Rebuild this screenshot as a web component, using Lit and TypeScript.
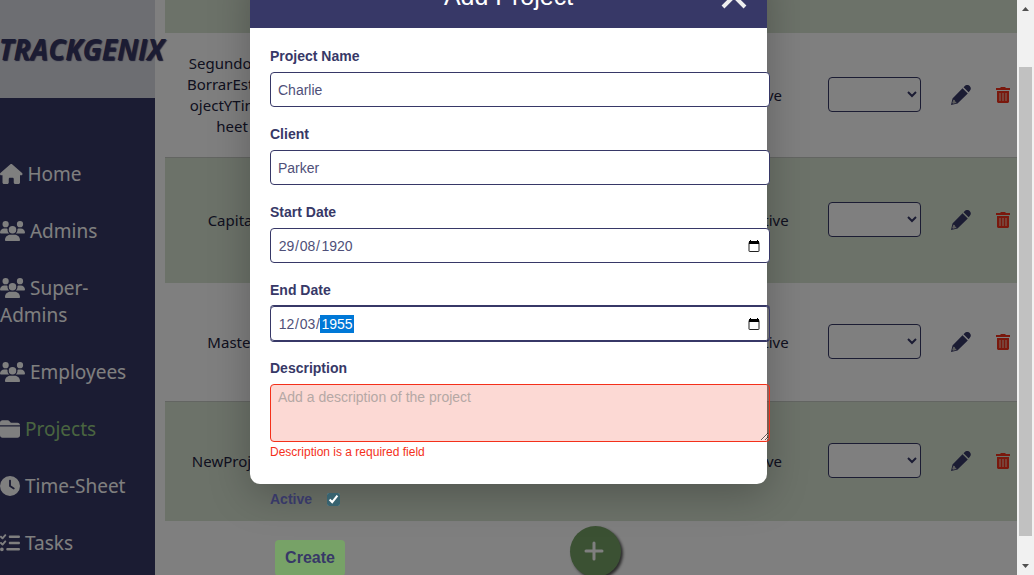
import { LitElement, html, css, svg } from "lit";
import { customElement } from "lit/decorators.js";

const ICONS: Record<string, { w: number; d: string }> = {
  home: { w: 576, d: "M575.8 255.5c0 18-15 32.1-32 32.1h-32l.7 160.2c0 2.7-.2 5.4-.5 8.1V472c0 22.1-17.9 40-40 40H456c-1.1 0-2.2 0-3.3-.1c-1.4 .1-2.8 .1-4.2 .1H416 392c-22.1 0-40-17.9-40-40V448 384c0-17.7-14.3-32-32-32H256c-17.7 0-32 14.3-32 32v64 24c0 22.1-17.9 40-40 40H160 128.1c-1.5 0-3-.1-4.5-.2c-1.2 .1-2.4 .2-3.6 .2H104c-22.1 0-40-17.9-40-40V360c0-.9 0-1.9 .1-2.8V287.6H32c-18 0-32-14-32-32.1c0-9 3-17 10-24L266.4 8c7-7 15-8 22-8s15 2 21 7L564.8 231.5c8 7 12 15 11 24z" },
  users: { w: 640, d: "M144 0a80 80 0 1 1 0 160A80 80 0 1 1 144 0zM512 0a80 80 0 1 1 0 160A80 80 0 1 1 512 0zM0 298.7C0 239.8 47.8 192 106.7 192h42.7c15.9 0 31 3.5 44.6 9.7c-1.3 7.2-1.9 14.7-1.9 22.3c0 38.2 16.8 72.5 43.3 96c-.2 0-.4 0-.7 0H21.3C9.6 320 0 310.4 0 298.7zM405.3 320c-.2 0-.4 0-.7 0c26.6-23.5 43.3-57.8 43.3-96c0-7.6-.7-15-1.9-22.3c13.6-6.3 28.7-9.7 44.6-9.7h42.7C592.2 192 640 239.8 640 298.7c0 11.8-9.6 21.3-21.3 21.3H405.3zM224 224a96 96 0 1 1 192 0 96 96 0 1 1 -192 0zM128 485.3C128 411.7 187.7 352 261.3 352H378.7C452.3 352 512 411.7 512 485.3c0 14.7-11.9 26.7-26.7 26.7H154.7c-14.7 0-26.7-11.9-26.7-26.7z" },
  folder: { w: 512, d: "M448 480H64c-35.3 0-64-28.7-64-64V192H512V416c0 35.3-28.7 64-64 64zm64-320H0V96C0 60.7 28.7 32 64 32H192c20.1 0 39.1 9.5 51.2 25.6l19.2 25.6c6 8.1 15.5 12.8 25.6 12.8H448c35.3 0 64 28.7 64 64z" },
  clock: { w: 512, d: "M256 0a256 256 0 1 1 0 512A256 256 0 1 1 256 0zM232 120V256c0 8 4 15.5 10.7 20l96 64c11 7.4 25.9 4.4 33.3-6.7s4.4-25.9-6.7-33.3L280 243.2V120c0-13.3-10.7-24-24-24s-24 10.7-24 24z" },
  tasks: { w: 512, d: "M152.1 38.2c9.9 8.9 10.7 24 1.8 33.9l-72 80c-4.4 4.9-10.6 7.8-17.2 7.9s-12.9-2.4-17.6-7L7 113C-2.3 103.6-2.3 88.4 7 79s24.6-9.4 33.9 0l22.1 22.1 55.1-61.2c8.9-9.9 24-10.7 33.9-1.8zm0 160c9.9 8.9 10.7 24 1.8 33.9l-72 80c-4.4 4.9-10.6 7.8-17.2 7.9s-12.9-2.4-17.6-7L7 273c-9.4-9.4-9.4-24.6 0-33.9s24.6-9.4 33.9 0l22.1 22.1 55.1-61.2c8.9-9.9 24-10.7 33.9-1.8zM224 96c0-17.7 14.3-32 32-32H480c17.7 0 32 14.3 32 32s-14.3 32-32 32H256c-17.7 0-32-14.3-32-32zm0 160c0-17.7 14.3-32 32-32H480c17.7 0 32 14.3 32 32s-14.3 32-32 32H256c-17.7 0-32-14.3-32-32zM160 416c0-17.7 14.3-32 32-32H480c17.7 0 32 14.3 32 32s-14.3 32-32 32H192c-17.7 0-32-14.3-32-32zM48 368a48 48 0 1 1 0 96 48 48 0 1 1 0-96z" },
};

const NAV = [
  { icon: "home", label: "Home" },
  { icon: "users", label: "Admins" },
  { icon: "users", label: "Super-Admins" },
  { icon: "users", label: "Employees" },
  { icon: "folder", label: "Projects", current: true },
  { icon: "clock", label: "Time-Sheet" },
  { icon: "tasks", label: "Tasks" },
];

const ROWS = [
  { name: ["SegundoPar", "BorrarEstePr", "ojectYTimes", "heet"], status: "Active" },
  { name: ["Capital"], status: "Inactive" },
  { name: ["Master"], status: "Inactive" },
  { name: ["NewProject"], status: "Active" },
];

@customElement("side-nav")
class SideNav extends LitElement {
  static styles = css`
    :host { display: block; background: #373867; color: #fff; font-family: "Noto Sans", sans-serif; }
    .brand { display: flex; align-items: center; justify-content: flex-end; height: 98px; background: #dadce4; }
    .name { margin: 0 -9px 0 0; color: #373867; font: italic 700 28px/36px "Open Sans", sans-serif; text-shadow: 1px 1px 1px #373867; white-space: nowrap; }
    .list { margin: 0; padding: 63px 0 0; list-style: none; display: flex; flex-direction: column; gap: 30px; }
    .link { display: block; color: inherit; text-decoration: none; font-size: 19px; line-height: 27px; }
    .current { color: #94ca81; }
    .icon { height: 20px; vertical-align: -3px; fill: #fff; }
  `;
  render() {
    return html`
      <div class="brand"><span class="name">TRACKGENIX</span></div>
      <nav>
        <ul class="list">
          ${NAV.map((n) => html`<li><a class="link ${n.current ? "current" : ""}" href="#"><svg class="icon" viewBox="0 0 ${ICONS[n.icon].w} 512" aria-hidden="true">${svg`<path d=${ICONS[n.icon].d}></path>`}</svg> ${n.label}</a></li>`)}
        </ul>
      </nav>`;
  }
}

@customElement("project-table")
class ProjectTable extends LitElement {
  static styles = css`
    :host { display: block; text-align: center; font-family: "Noto Sans", sans-serif; color: #222240; }
    .table { width: 100%; table-layout: fixed; border-collapse: separate; border-spacing: 0; font-size: 15px; line-height: 21px; }
    .c-name { width: 134px; } .c-status { width: 110px; } .c-select { width: 117px; } .c-edit { width: 56px; } .c-del { width: 28px; }
    td { padding: 0; box-sizing: border-box; height: 119px; }
    .tall td { height: 125px; }
    .head th { height: 33px; padding: 0; background: #d9e4d3; }
    .row td { border-bottom: 1px solid #c6cac4; }
    .row:nth-child(even) td { background: #d9e4d3; border-bottom-color: #d9e4d3; }
    .line { display: block; }
    .select { display: block; width: 93px; height: 35px; border: 1px solid #373867; border-radius: 4px; background: #fff; color: #373867; padding: 0 3px; margin: 0 auto 2px; }
    .btn { border: 0; padding: 0; background: none; display: block; margin: 0 auto; }
    .ico { display: block; }
    .actions { padding: 5px 0 0 8px; }
    .add { display: grid; place-items: center; width: 51px; height: 51px; margin: 0 auto; padding: 0 2px 2px 0; border: 0; border-radius: 50%; background: #77a267; box-shadow: 2px 2px 3px #555; }
  `;
  render() {
    return html`
      <table class="table">
        <colgroup><col class="c-name"><col><col class="c-status"><col class="c-select"><col class="c-edit"><col class="c-del"></colgroup>
        <thead><tr class="head"><th></th><th></th><th></th><th></th><th></th><th></th></tr></thead>
        <tbody>
          ${ROWS.map((r, i) => html`<tr class="row ${i < 2 ? "tall" : ""}">
            <td>${r.name.map((l) => html`<span class="line">${l}</span>`)}</td>
            <td></td>
            <td>${r.status}</td>
            <td><select class="select" aria-label="Team"><option></option></select></td>
            <td><button class="btn" aria-label="Edit"><svg class="ico" width="20" height="20" viewBox="0 0 20 20" fill="#373867"><path d="M11.500 3.200l5.300 5.300L6.500 18.500 0 20l1.500-6.500zM12.500 2.200l1.300-1.200c1.400-1.400 3.400-1.400 4.900 0s1.500 3.500 0 5l-1.100 1.300z"/><path d="M2.300 14.800l1.500.2.300 1.600 1.300.4-.300 1-3 .8-.9-.9z" fill="#bbb"/></svg></button></td>
            <td><button class="btn" aria-label="Delete"><svg class="ico" width="14" height="16" viewBox="0 0 14 16" fill="#f4301a"><path d="M0 1h4L5 0h4l1 1h4v2H0zM1 4h12v11l-1 1H2l-1-1z"/><path d="M3 6h2v8H3zM6 6h2v8H6zM9 6h2v8H9z" fill="#f2826f"/></svg></button></td>
          </tr>`)}
        </tbody>
      </table>
      <div class="actions">
        <button class="add" aria-label="Add project"><svg width="20" height="20" viewBox="0 0 20 20" stroke="#fff" stroke-width="3" stroke-linecap="round"><path d="M10 2v16M2 10h16"/></svg></button>
      </div>`;
  }
}

@customElement("project-form")
class ProjectForm extends LitElement {
  static styles = css`
    :host { display: block; font: 14px/16px "Liberation Sans", Arial, sans-serif; color: #373867; }
    .head { display: grid; grid-template-columns: 1fr auto 1fr; align-items: center; height: 64px; background: #373867; color: #fff; }
    .title { grid-column: 2; margin: 0; font-size: 25px; line-height: 28px; font-weight: 400; }
    .close { justify-self: end; margin-right: 20px; border: 0; background: none; padding: 0; }
    .ico { display: block; }
    .form { display: flex; flex-direction: column; align-items: flex-start; padding: 20px; }
    .field { display: flex; flex-direction: column; gap: 8px; margin-bottom: 19px; min-width: 500px; }
    .label { font-weight: 700; }
    .input { box-sizing: border-box; width: 100%; height: 35px; border: 1px solid #373867; border-radius: 4px; padding: 0 7px; background: #fff; color: #4f5079; font: inherit; outline: none; }
    .date { display: flex; align-items: center; }
    .date:focus-within { box-shadow: 0 -1px #373867, 0 1px #373867; background: linear-gradient(90deg, #fff calc(100% - 2px), transparent 0); }
    .part { box-sizing: border-box; width: 17px; height: 18px; border: 0; padding: 0; background: none; color: inherit; font: inherit; text-align: center; outline: none; }
    .year { width: 34px; }
    .part:focus { background: #0078d7; color: #fff; }
    .part::selection { background: #0078d7; color: #fff; }
    .slash { width: 4px; }
    .pick { margin: 0 2px 0 auto; border: 0; padding: 0; background: none; }
    .area { height: 58px; padding: 4px 7px; border-color: #f4301a; background: rgba(240, 66, 40, 0.2); display: block; }
    .area::placeholder { color: #b5a8a5; }
    .error { margin: -5px 0 0; color: #f4301a; font-size: 12px; line-height: 14px; }
    .check { display: flex; align-items: center; gap: 15px; font-weight: 700; margin: 13px 0 33px; }
    .box { margin: 0; width: 13px; height: 13px; accent-color: #37626f; }
    .create { margin-left: 5px; width: 70px; height: 36px; border: 0; border-radius: 4px; padding: 0; background: #77a267; color: #373867; font: 700 16px "Liberation Sans", Arial, sans-serif; }
  `;
  firstUpdated() {
    const year = this.renderRoot.querySelector<HTMLInputElement>("#end-year");
    year?.focus();
    year?.select();
  }
  dateField(id: string, label: string, day: string, month: string, year: string) {
    return html`<div class="field">
      <label class="label" for="${id}-day">${label}</label>
      <div class="input date" role="group" aria-label=${label}>
        <input class="part" id="${id}-day" value=${day} maxlength="2" inputmode="numeric"><span class="slash">/</span><input class="part" aria-label="Month" value=${month} maxlength="2" inputmode="numeric"><span class="slash">/</span><input class="part year" id="${id}-year" aria-label="Year" value=${year} maxlength="4" inputmode="numeric">
        <button class="pick" type="button" aria-label="Open calendar"><svg class="ico" width="12" height="12" viewBox="0 0 12 12"><path d="M1 2.500V11q0 .5.500.5h9q.5 0 .5-.5V2.500" fill="none" stroke="#222" stroke-width="1"/><path d="M1 1h10v3H1zM2 0h1v2H2zM9 0h1v2H9z"/></svg></button>
      </div>
    </div>`;
  }
  render() {
    return html`
      <header class="head">
        <h2 class="title">Add Project</h2>
        <button class="close" aria-label="Close"><svg class="ico" width="26" height="26" viewBox="0 0 26 26" stroke="#eee" stroke-width="4"><path d="M2 2l22 22M24 2L2 24"/></svg></button>
      </header>
      <form class="form">
        <div class="field"><label class="label" for="name">Project Name</label><input class="input" id="name" value="Charlie"></div>
        <div class="field"><label class="label" for="client">Client</label><input class="input" id="client" value="Parker"></div>
        ${this.dateField("start", "Start Date", "29", "08", "1920")}
        ${this.dateField("end", "End Date", "12", "03", "1955")}
        <div class="field"><label class="label" for="desc">Description</label><textarea class="input area" id="desc" placeholder="Add a description of the project"></textarea><p class="error">Description is a required field</p></div>
        <label class="check">Active <input class="box" type="checkbox" checked></label>
        <button class="create" type="button">Create</button>
      </form>`;
  }
}

@customElement("app-root")
class AppRoot extends LitElement {
  static styles = css`
    :host { display: flex; height: 100vh; overflow: hidden; }
    .page { position: relative; flex: 1; display: grid; grid-template-columns: 155px 1fr; gap: 10px; background: #fff; overflow: hidden; }
    .nav { position: relative; z-index: 1; }
    .overlay { position: absolute; inset: 0; z-index: 2; background: rgba(0, 0, 0, 0.5); }
    .modal { width: 517px; height: 520px; margin: -36px auto 0; background: #fff; border-radius: 10px; box-shadow: 0 10px 40px rgba(0, 0, 0, 0.25); }
    .scroll { display: flex; flex-direction: column; align-items: center; width: 17px; background: #f1f1f1; }
    .arrow { width: 17px; height: 17px; fill: #505050; }
    .thumb { width: 13px; margin: 50px 0 22px; flex: 1; background: #c1c1c1; }
  `;
  render() {
    return html`
      <div class="page">
        <side-nav class="nav"></side-nav>
        <project-table></project-table>
        <div class="overlay"><project-form class="modal"></project-form></div>
      </div>
      <div class="scroll">
        <svg class="arrow" viewBox="0 0 17 17"><path d="M5 11h7L8.500 7z"/></svg>
        <div class="thumb"></div>
        <svg class="arrow" viewBox="0 0 17 17"><path d="M5 6h7L8.500 10z"/></svg>
      </div>`;
  }
}
